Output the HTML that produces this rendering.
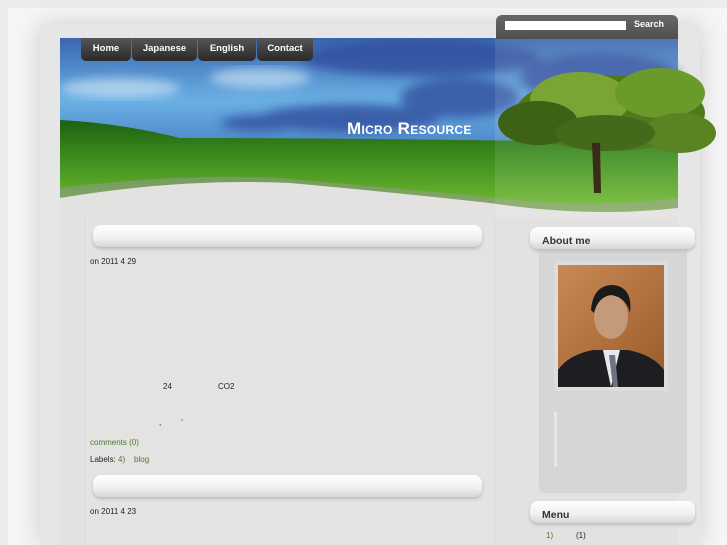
<!DOCTYPE html>
<html><head><meta charset="utf-8"><style>
*{margin:0;padding:0;box-sizing:border-box}
body{width:727px;height:545px;overflow:hidden;background:#ececec;font-family:"Liberation Sans","Noto Sans CJK JP",sans-serif;position:relative}
.frame{position:absolute;left:8px;top:8px;width:719px;height:537px;background:#f6f6f6}
.shell{position:absolute;left:40px;top:25px;width:660px;height:520px;background:#e6e6e6;box-shadow:0 0 25px #ccc}
.main{position:absolute;left:60px;top:38px;width:618px;height:507px;background:#e3e2e1}
.col{position:absolute;left:85px;top:215px;width:410px;height:330px;background:#e4e3e2;border-left:1px solid #d8d8d8;border-right:1px solid #d8d8d8}
.title{position:absolute;left:347px;top:119px;color:#fff;font-weight:bold;font-size:17px;letter-spacing:.3px;font-variant:small-caps}
.nav{position:absolute;left:81px;top:38px;display:flex}
.nav div{height:23px;background:linear-gradient(#555,#2a2a2a);color:#fff;font-size:9.5px;font-weight:bold;line-height:22px;text-align:center;border-radius:0 0 5px 5px;margin-right:1px}
.search{position:absolute;left:496px;top:15px;width:182px;height:24px;background:linear-gradient(#666,#505050);border-radius:6px 6px 0 0}
.search .inp{position:absolute;left:9px;top:6px;width:121px;height:9px;background:#fff}
.search span{position:absolute;left:138px;top:4px;color:#fff;font-size:9px;font-weight:bold}
.bar{position:absolute;height:22px;background:linear-gradient(#fff,#f0f0f0 60%,#d6d6d6);border-radius:8px;box-shadow:0 2px 3px #bbb}
.t{position:absolute;font-size:8px;color:#222}
.g{color:#4a7a2a}
.side{position:absolute;left:539px;top:250px;width:148px;height:243px;background:#d6d6d6;border-radius:0 0 6px 6px}
.sh{position:absolute;font-size:10.5px;font-weight:bold;color:#333;padding:8px 0 0 12px}
</style></head><body>
<div class="frame"></div>
<div class="shell"></div>
<div class="main"></div>
<div class="col"></div>
<svg style="position:absolute;left:60px;top:38px" width="667" height="180">
 <defs>
  <linearGradient id="sky" x1="0" y1="0" x2="0" y2="1">
   <stop offset="0" stop-color="#3a66b0"/><stop offset=".35" stop-color="#6ab0e4"/><stop offset=".6" stop-color="#4d86c8"/><stop offset=".7" stop-color="#3c70b0"/>
  </linearGradient>
  <linearGradient id="grass" x1="0" y1="0" x2="0" y2="1">
   <stop offset="0" stop-color="#1e6010"/><stop offset=".4" stop-color="#3e8f1e"/><stop offset="1" stop-color="#7cc235"/>
  </linearGradient>
  <filter id="b"><feGaussianBlur stdDeviation="5"/></filter>
 </defs>
 <rect width="618" height="180" fill="url(#sky)"/>
 <g filter="url(#b)" fill="#2d4a9a" opacity=".75">
  <ellipse cx="360" cy="20" rx="120" ry="18"/>
  <ellipse cx="290" cy="80" rx="90" ry="14"/>
  <ellipse cx="200" cy="85" rx="40" ry="8"/>
  <ellipse cx="400" cy="60" rx="60" ry="20"/>
  <ellipse cx="540" cy="40" rx="80" ry="25"/>
 </g>
 <g filter="url(#b)" fill="#d8eefa" opacity=".6">
  <ellipse cx="60" cy="50" rx="60" ry="10"/>
  <ellipse cx="200" cy="40" rx="50" ry="10"/>
 </g>
 <path d="M0 82 Q60 85 120 100 Q300 100 618 105 L618 180 L0 180Z" fill="url(#grass)"/>
 <path d="M0 150 Q120 135 220 140 Q330 150 420 158 Q520 172 618 160 L618 180 L0 180Z" fill="#9a9a9a" opacity=".5"/>
 <path d="M0 160 Q120 140 230 145 Q340 155 430 165 Q530 180 618 170 L618 180 L0 180Z" fill="#e3e2e1"/>
 <rect x="435" y="0" width="183" height="180" fill="#fff" opacity=".1"/>
 <g>
  <ellipse cx="550" cy="75" rx="95" ry="38" fill="#4e7a1c"/>
  <ellipse cx="520" cy="62" rx="50" ry="28" fill="#7aa434"/>
  <ellipse cx="600" cy="55" rx="45" ry="25" fill="#6a9a2a"/>
  <ellipse cx="478" cy="85" rx="40" ry="22" fill="#3d6216"/>
  <ellipse cx="620" cy="95" rx="36" ry="20" fill="#5a8422"/>
  <ellipse cx="545" cy="95" rx="50" ry="18" fill="#44691a"/>
  <path d="M532 105 L534 155 L541 155 L540 105 Z" fill="#3a2a18"/>
 </g>
</svg>
<div class="title">Micro Resource</div>
<div class="nav">
 <div style="width:50px">Home</div><div style="width:65px">Japanese</div><div style="width:58px">English</div><div style="width:56px">Contact</div>
</div>
<div class="search"><div class="inp"></div><span>Search</span></div>

<div class="bar" style="left:93px;top:225px;width:389px"></div>
<div class="t" style="left:90px;top:257px">on 2011 4 29</div>
<div class="t" style="left:163px;top:382px">24</div>
<div class="t" style="left:218px;top:382px">CO2</div>
<div class="t" style="left:159px;top:418px">,&nbsp;&nbsp;&nbsp;&nbsp;&nbsp;&nbsp;&nbsp;&nbsp;&nbsp;'</div>
<div class="t g" style="left:90px;top:438px">comments (0)</div>
<div class="t" style="left:90px;top:455px">Labels: <span class="g">4)&nbsp;&nbsp;&nbsp;&nbsp;blog</span></div>
<div class="bar" style="left:93px;top:475px;width:389px"></div>
<div class="t" style="left:90px;top:507px">on 2011 4 23</div>

<div class="side"></div>
<div class="bar sh" style="left:530px;top:227px;width:165px">About me</div>
<div style="position:absolute;left:554px;top:261px;width:114px;height:130px;background:#ddd"></div>
<div style="position:absolute;left:558px;top:265px;width:106px;height:122px;background:linear-gradient(135deg,#c88a55,#9a5a2a)"></div>
<svg style="position:absolute;left:558px;top:265px" width="106" height="122">
 <path d="M0 122 L0 105 Q10 90 35 85 L70 85 Q95 90 106 105 L106 122Z" fill="#1e1e22"/>
 <path d="M45 85 L53 122 L62 85Z" fill="#e8e8ee"/>
 <path d="M51 90 L55 122 L60 122 L57 90Z" fill="#6f7580"/>
 <ellipse cx="53" cy="52" rx="17" ry="22" fill="#c59a7a"/>
 <path d="M33 45 Q35 20 55 20 Q75 22 72 48 Q68 32 53 30 Q40 32 36 48Z" fill="#1a1a1a"/>
</svg>
<div style="position:absolute;left:554px;top:412px;width:3px;height:55px;background:#e6e6e6"></div>
<div class="bar sh" style="left:530px;top:501px;width:165px">Menu</div>
<div class="t g" style="left:546px;top:531px">1)</div>
<div class="t" style="left:576px;top:531px">(1)</div>
</body></html>
